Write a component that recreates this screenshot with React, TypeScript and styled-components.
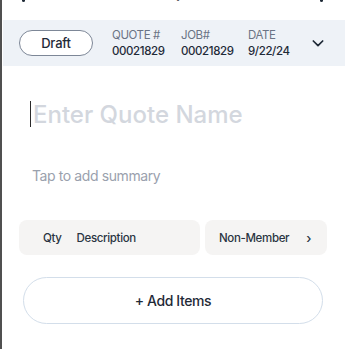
import styled, { createGlobalStyle } from 'styled-components';

const GlobalStyle = createGlobalStyle`
  html, body {
    margin: 0;
    padding: 0;
    background: #fff;
  }
  body {
    font-family: Inter, "Noto Sans", sans-serif;
    color: #1f2a37;
  }
`;

const Page = styled.div`
  width: 345px;
  height: 349px;
  box-sizing: border-box;
  border-left: 2px solid #505050;
  overflow: hidden;
  background: #fff;
`;

const Header = styled.div`
  height: 20px;
  display: flex;
  align-items: flex-end;
  justify-content: space-between;
  padding: 0 22px 0 20px;
  box-sizing: border-box;
`;

const HeaderTitle = styled.div`
  font-size: 15px;
  line-height: 15px;
  font-weight: 600;
  color: #1f2a37;
  margin-bottom: 18px;
`;

const HeaderIcon = styled.div`
  width: 3px;
  height: 20px;
  margin-bottom: 18px;
  background: #1f2a37;
  border-radius: 2px;
`;

const MetaBand = styled.div`
  margin-left: 1px;
  height: 46px;
  background: #eef2f7;
  display: flex;
  align-items: center;
  padding-left: 16px;
  box-sizing: border-box;
`;

const StatusPill = styled.div`
  width: 74px;
  height: 26px;
  box-sizing: border-box;
  border: 1px solid #7d8797;
  border-radius: 13px;
  background: #fff;
  display: flex;
  align-items: center;
  justify-content: center;
  font-size: 13px;
  font-weight: 500;
  letter-spacing: -0.2px;
  color: #1f2a37;
  margin-right: 19px;
`;

const MetaItem = styled.div<{ $width: number }>`
  width: ${(p) => p.$width}px;
  display: flex;
  flex-direction: column;
  gap: 2px;
`;

const MetaLabel = styled.span`
  font-size: 11.5px;
  color: #6b7485;
  letter-spacing: -0.4px;
`;

const MetaValue = styled.span`
  font-size: 11.5px;
  font-weight: 500;
  color: #1f2a37;
  letter-spacing: -0.4px;
`;

const Chevron = styled.div`
  display: flex;
  align-items: center;
`;

const Body = styled.div`
  padding: 0 18px 0 17px;
`;

const NameRow = styled.div`
  display: flex;
  align-items: center;
  height: 36px;
  margin-top: 30px;
  padding-left: 11px;
`;

const Caret = styled.div`
  width: 1px;
  height: 26px;
  background: #2b2b2b;
  margin-right: 2px;
`;

const NamePlaceholder = styled.span`
  font-size: 24px;
  font-weight: 500;
  color: #d3d7de;
`;

const Summary = styled.div`
  margin-top: 35px;
  padding-left: 13px;
  font-size: 14px;
  color: #9aa1ad;
  letter-spacing: -0.4px;
`;

const ItemRow = styled.div`
  margin-top: 36px;
  display: grid;
  grid-template-columns: 181px 122px;
  gap: 5px;
`;

const RowBox = styled.div<{ $justify?: string }>`
  height: 35px;
  background: #f5f4f3;
  border-radius: 8px;
  display: flex;
  align-items: center;
  justify-content: ${(p) => p.$justify || 'flex-start'};
  font-size: 11.5px;
  font-weight: 500;
  letter-spacing: -0.35px;
  color: #2a3442;
  box-sizing: border-box;
`;

const Cell = styled.span<{ $pad: number }>`
  padding-left: ${(p) => p.$pad}px;
`;

const Arrow = styled.span`
  margin-right: 16px;
  font-size: 13px;
`;

const AddButton = styled.button`
  margin: 22px 0 0 4px;
  width: 300px;
  height: 47px;
  border: 1px solid #d3deea;
  border-radius: 24px;
  background: #fff;
  font-family: inherit;
  font-size: 14px;
  font-weight: 500;
  letter-spacing: -0.4px;
  color: #1f2a37;
  display: flex;
  align-items: center;
  justify-content: center;
`;

const meta = [
  { label: 'QUOTE #', value: '00021829', width: 69 },
  { label: 'JOB#', value: '00021829', width: 67 },
  { label: 'DATE', value: '9/22/24', width: 62 },
];

export default function App() {
  return (
    <>
      <GlobalStyle />
      <Page>
        <Header>
          <HeaderIcon />
          <HeaderTitle>New Quote</HeaderTitle>
          <HeaderIcon />
        </Header>

        <MetaBand>
          <StatusPill>Draft</StatusPill>
          {meta.map((m) => (
            <MetaItem key={m.label} $width={m.width}>
              <MetaLabel>{m.label}</MetaLabel>
              <MetaValue>{m.value}</MetaValue>
            </MetaItem>
          ))}
          <Chevron>
            <svg width="16" height="16" viewBox="0 0 24 24" fill="none" stroke="#1f2a37" strokeWidth="2.6" strokeLinecap="round" strokeLinejoin="round">
              <polyline points="5 9 12 16 19 9" />
            </svg>
          </Chevron>
        </MetaBand>

        <Body>
          <NameRow>
            <Caret />
            <NamePlaceholder>Enter Quote Name</NamePlaceholder>
          </NameRow>
          <Summary>Tap to add summary</Summary>

          <ItemRow>
            <RowBox>
              <Cell $pad={24}>Qty</Cell>
              <Cell $pad={15}>Description</Cell>
            </RowBox>
            <RowBox $justify="space-between">
              <Cell $pad={14}>Non-Member</Cell>
              <Arrow>›</Arrow>
            </RowBox>
          </ItemRow>

          <AddButton>+ Add Items</AddButton>
        </Body>
      </Page>
    </>
  );
}
